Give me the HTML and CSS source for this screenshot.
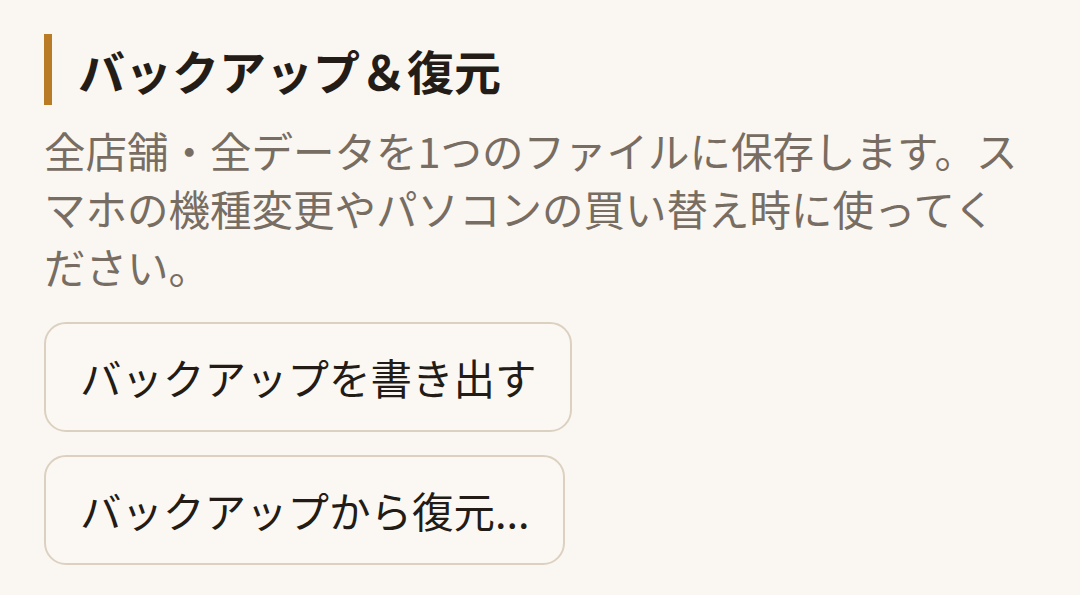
FILE: index.html
```html
<!DOCTYPE html>
<html lang="ja">
<head>
<meta charset="utf-8">
<link rel="stylesheet" href="styles.css">
</head>
<body>
<section class="panel">
  <h2 class="title">バックアップ＆復元</h2>
  <p class="desc">全店舗・全データを1つのファイルに保存します。スマホの機種変更やパソコンの買い替え時に使ってください。</p>
  <div class="actions">
    <button class="btn">バックアップを書き出す</button>
    <button class="btn">バックアップから復元...</button>
  </div>
</section>
</body>
</html>
```
FILE: styles.css
```css
html, body {
  margin: 0;
  padding: 0;
  background: #faf7f2;
}
body {
  font-family: "Noto Sans CJK JP", "Noto Sans", sans-serif;
  color: #2a221b;
}
.panel {
  width: 985px;
  padding: 34px 44px 0 44px;
}
.title {
  margin: 0;
  border-left: 8px solid #b97b25;
  padding-left: 26px;
  font-size: 47px;
  line-height: 71px;
  font-weight: 700;
  color: #241d17;
}
.desc {
  margin: 16px 0 0 0;
  font-size: 41.5px;
  line-height: 58px;
  color: #786d62;
}
.actions {
  margin-top: 27px;
  display: flex;
  flex-direction: column;
  align-items: flex-start;
  gap: 23px;
}
.btn {
  font-family: inherit;
  font-size: 41.5px;
  line-height: 50px;
  padding: 28px 33px 28px 34px;
  border: 2px solid #dcd1c0;
  border-radius: 22px;
  background: #fbf8f3;
  color: #231c16;
}
```
